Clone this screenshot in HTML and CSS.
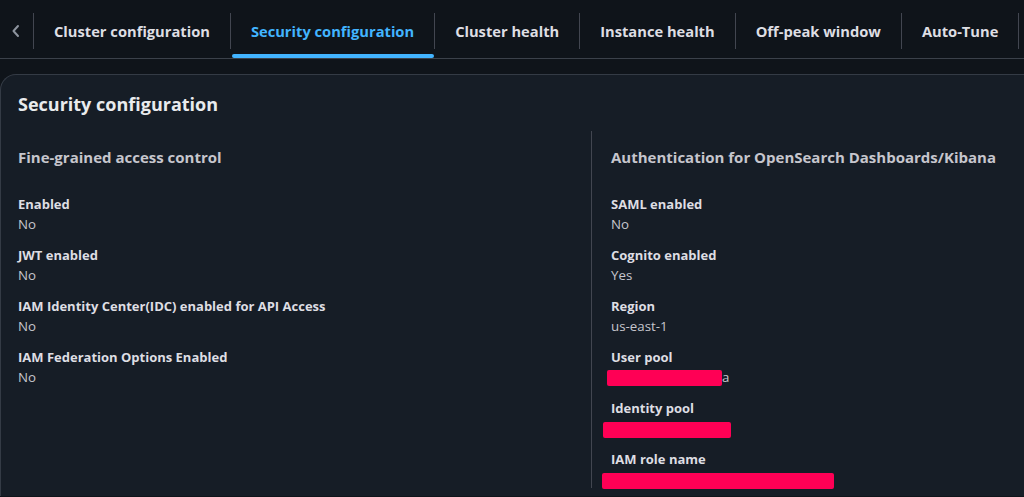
FILE: index.html
```html
<!DOCTYPE html>
<html lang="en">
<head>
<meta charset="utf-8">
<title>Security configuration</title>
<link rel="stylesheet" href="styles.css">
</head>
<body>
<div class="tabs">
  <div class="chev">
    <svg width="10" height="14" viewBox="0 0 10 14"><path d="M7 2 L2.5 7 L7 12" fill="none" stroke="#8d949e" stroke-width="2" stroke-linecap="round" stroke-linejoin="round"/></svg>
  </div>
  <div class="tab">Cluster configuration</div>
  <div class="tab active">Security configuration</div>
  <div class="tab">Cluster health</div>
  <div class="tab">Instance health</div>
  <div class="tab">Off-peak window</div>
  <div class="tab">Auto-Tune</div>
  <div class="tab"></div>
</div>
<div class="card">
  <h2 class="card-title">Security configuration</h2>
  <div class="columns">
    <div class="col">
      <h3 class="col-title">Fine-grained access control</h3>
      <dl class="kv">
        <div class="pair"><dt>Enabled</dt><dd>No</dd></div>
        <div class="pair"><dt>JWT enabled</dt><dd>No</dd></div>
        <div class="pair"><dt>IAM Identity Center(IDC) enabled for API Access</dt><dd>No</dd></div>
        <div class="pair"><dt>IAM Federation Options Enabled</dt><dd>No</dd></div>
      </dl>
    </div>
    <div class="col col-right">
      <h3 class="col-title">Authentication for OpenSearch Dashboards/Kibana</h3>
      <dl class="kv">
        <div class="pair"><dt>SAML enabled</dt><dd>No</dd></div>
        <div class="pair"><dt>Cognito enabled</dt><dd>Yes</dd></div>
        <div class="pair"><dt>Region</dt><dd>us-east-1</dd></div>
        <div class="pair"><dt>User pool</dt><dd><span class="mark m1"></span>a</dd></div>
        <div class="pair"><dt>Identity pool</dt><dd><span class="mark m2"></span></dd></div>
        <div class="pair"><dt>IAM role name</dt><dd><span class="mark m3"></span></dd></div>
      </dl>
    </div>
  </div>
</div>
</body>
</html>
```
FILE: styles.css
```css
html, body {
  margin: 0;
  padding: 0;
  background: #0f141a;
  height: 100%;
  overflow: hidden;
}
body {
  font-family: "Open Sans", "Noto Sans", sans-serif;
  color: #dedee3;
}
.tabs {
  display: flex;
  align-items: center;
  height: 58px;
  border-bottom: 1px solid #3b414a;
  white-space: nowrap;
  overflow: hidden;
}
.chev {
  flex: 0 0 33px;
  display: flex;
  justify-content: center;
  padding-top: 3px;
  padding-right: 2px;
  box-sizing: border-box;
}
.tab {
  flex: 0 0 auto;
  position: relative;
  height: 58px;
  display: flex;
  align-items: center;
  padding: 3px 20px 0 21px;
  box-sizing: border-box;
  font-size: 14.7px;
  font-weight: 700;
  color: #dedee3;
}
.tab::before {
  content: "";
  position: absolute;
  left: 0;
  top: 13px;
  bottom: 9px;
  width: 1px;
  background: #424650;
}
.tab.active {
  color: #42b4ff;
}
.tab.active::after {
  content: "";
  position: absolute;
  left: 2px;
  right: 0;
  bottom: 0;
  height: 4px;
  border-radius: 2px;
  background: #42b4ff;
}
.card {
  margin-top: 15px;
  background: #161d26;
  border-top: 1px solid #343b45;
  border-left: 1px solid #343b45;
  border-radius: 16px 0 0 0;
  height: 422px;
  box-sizing: border-box;
  padding: 0 0 0 17px;
  overflow: hidden;
}
.card-title {
  margin: 0;
  padding: 17px 0 0;
  font-size: 18px;
  line-height: 24px;
  font-weight: 700;
  color: #e9ebed;
}
.columns {
  display: grid;
  grid-template-columns: 573px 1fr;
  margin-top: 15px;
}
.col-right {
  border-left: 1px solid #424650;
  padding-left: 19px;
  height: 357px;
}
.col-title {
  margin: 0;
  padding-top: 15px;
  font-size: 15px;
  line-height: 22px;
  font-weight: 700;
  color: #c6c6cd;
}
.kv {
  margin: 26px 0 0;
  display: flex;
  flex-direction: column;
  gap: 11px;
}
.pair dt {
  font-size: 13px;
  line-height: 20px;
  font-weight: 700;
  color: #dedee3;
}
.pair dd {
  margin: 0;
  height: 20px;
  font-size: 13.3px;
  line-height: 20px;
  color: #c6c6cd;
  white-space: nowrap;
}
.mark {
  display: inline-block;
  vertical-align: top;
  margin-top: 3px;
  height: 16px;
  background: #ff0055;
  border-radius: 2px;
}
.m1 { margin-left: -4px; width: 115px; }
.m2 { margin-left: -8px; width: 128px; margin-top: 4px; }
.m3 { margin-left: -9px; width: 232px; margin-top: 4px; }
```
